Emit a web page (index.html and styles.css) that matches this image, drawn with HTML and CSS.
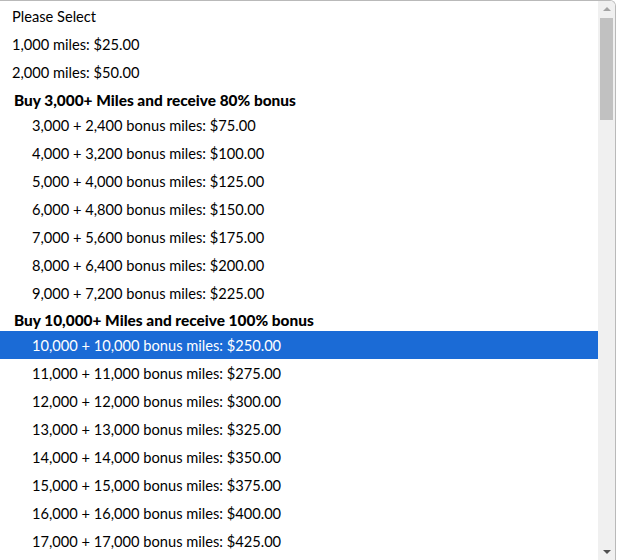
FILE: index.html
```html
<!DOCTYPE html>
<html lang="en">
<head>
    <meta charset="UTF-8">
    <title>Miles Select</title>
    <link rel="stylesheet" href="styles.css">
</head>
<body>
    <div class="menu">
        <ul class="options">
            <li class="opt">Please Select</li>
            <li class="opt">1,000 miles: $25.00</li>
            <li class="opt">2,000 miles: $50.00</li>
            <li class="group">Buy 3,000+ Miles and receive 80% bonus</li>
            <li class="opt sub">3,000 + 2,400 bonus miles: $75.00</li>
            <li class="opt sub">4,000 + 3,200 bonus miles: $100.00</li>
            <li class="opt sub">5,000 + 4,000 bonus miles: $125.00</li>
            <li class="opt sub">6,000 + 4,800 bonus miles: $150.00</li>
            <li class="opt sub">7,000 + 5,600 bonus miles: $175.00</li>
            <li class="opt sub">8,000 + 6,400 bonus miles: $200.00</li>
            <li class="opt sub">9,000 + 7,200 bonus miles: $225.00</li>
            <li class="group">Buy 10,000+ Miles and receive 100% bonus</li>
            <li class="opt sub selected">10,000 + 10,000 bonus miles: $250.00</li>
            <li class="opt sub">11,000 + 11,000 bonus miles: $275.00</li>
            <li class="opt sub">12,000 + 12,000 bonus miles: $300.00</li>
            <li class="opt sub">13,000 + 13,000 bonus miles: $325.00</li>
            <li class="opt sub">14,000 + 14,000 bonus miles: $350.00</li>
            <li class="opt sub">15,000 + 15,000 bonus miles: $375.00</li>
            <li class="opt sub">16,000 + 16,000 bonus miles: $400.00</li>
            <li class="opt sub">17,000 + 17,000 bonus miles: $425.00</li>
        </ul>
        <div class="scrollbar">
            <span class="arrow up"></span>
            <div class="thumb"></div>
            <span class="arrow down"></span>
        </div>
    </div>
</body>
</html>
```

FILE: styles.css
```css
body {
    margin: 0;
    background: #ffffff;
    font-family: Lato, "Liberation Sans", sans-serif;
}

.menu {
    display: flex;
    width: 615px;
    height: 559px;
    border-top: 1px solid #b9b9b9;
    border-right: 1px solid #b9b9b9;
    border-top-right-radius: 6px;
    overflow: hidden;
    background: #ffffff;
}

.options {
    flex: 1;
    list-style: none;
    margin: 0;
    padding: 1px 0 0;
    overflow: hidden;
}

.opt {
    height: 28px;
    box-sizing: border-box;
    padding-top: 2px;
    line-height: 26px;
    padding-left: 12px;
    font-size: 14.65px;
    color: #000000;
    white-space: nowrap;
}

.opt.sub {
    padding-left: 32px;
}

.opt.selected {
    background: #1b6bd6;
    color: #ffffff;
}

.group {
    height: 24.5px;
    padding: 4.5px 0 0 14px;
    box-sizing: border-box;
    line-height: 18px;
    font-size: 15.4px;
    font-weight: 900;
    color: #000000;
    white-space: nowrap;
}

.scrollbar {
    width: 17px;
    display: flex;
    flex-direction: column;
    align-items: center;
    background: #f0f0f0;
}

.arrow {
    width: 0;
    height: 0;
    border-left: 4px solid transparent;
    border-right: 4px solid transparent;
}

.arrow.up {
    margin-top: 6px;
    border-bottom: 4px solid #a3a3a3;
}

.arrow.down {
    margin-top: auto;
    margin-bottom: 6px;
    border-top: 4px solid #505050;
}

.thumb {
    width: 13px;
    height: 102px;
    margin-top: 7px;
    background: #c1c1c1;
}
```
